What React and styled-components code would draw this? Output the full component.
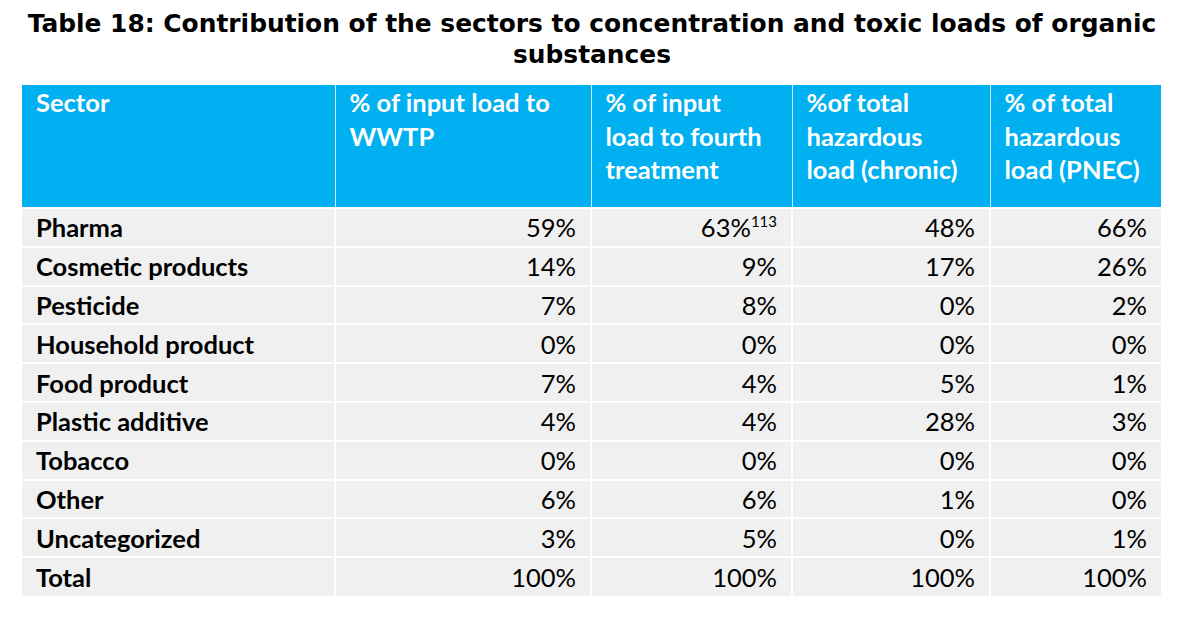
import React from 'react';
import styled, { createGlobalStyle } from 'styled-components';

const GlobalStyle = createGlobalStyle`
  html, body {
    margin: 0;
    padding: 0;
    background: #ffffff;
  }
`;

const Page = styled.div`
  width: 1200px;
  height: 629px;
  padding: 8px 22px 0 22px;
  box-sizing: border-box;
`;

const Caption = styled.h1`
  margin: 0 16px 15px 0;
  font-family: 'DejaVu Sans', Verdana, sans-serif;
  font-weight: bold;
  font-size: 24.9px;
  line-height: 31px;
  text-align: center;
  color: #000;
`;

const Table = styled.table`
  width: 1139px;
  border-collapse: collapse;
  table-layout: fixed;
  font-family: Lato, 'Open Sans', sans-serif;
  font-size: 25.5px;
  color: #000;
`;

const HeadCell = styled.th`
  background: #00b0f0;
  color: #ffffff;
  font-weight: bold;
  text-align: left;
  vertical-align: top;
  height: 123px;
  padding: 1px 8px 0 14px;
  line-height: 33.5px;
  border-left: 1px solid #cfeefb;
  box-sizing: border-box;
  &:first-child {
    border-left: none;
  }
`;

const HeadLine = styled.span`
  display: block;
  white-space: nowrap;
`;

const Row = styled.tr`
  height: 38.8px;
`;

const Cell = styled.td`
  background: #f0f0f0;
  padding: 0 14px;
  line-height: 36px;
  text-align: ${(p) => (p.$label ? 'left' : 'right')};
  font-weight: ${(p) => (p.$label ? 'bold' : 'normal')};
  border-top: 2px solid #ffffff;
  border-left: 2px solid #ffffff;
  &:first-child {
    border-left: none;
  }
`;

const Note = styled.sup`
  font-size: 15px;
  line-height: 0;
  vertical-align: 10px;
`;

const columns = [
  { key: 'sector', lines: ['Sector'], width: 313 },
  { key: 'wwtp', lines: ['% of input load to', 'WWTP'], width: 256 },
  { key: 'fourth', lines: ['% of input', 'load to fourth', 'treatment'], width: 201 },
  { key: 'chronic', lines: ['%of total', 'hazardous', 'load (chronic)'], width: 198 },
  { key: 'pnec', lines: ['% of total', 'hazardous', 'load (PNEC)'], width: 171 },
];

const rows = [
  ['Pharma', '59%', '63%', '48%', '66%'],
  ['Cosmetic products', '14%', '9%', '17%', '26%'],
  ['Pesticide', '7%', '8%', '0%', '2%'],
  ['Household product', '0%', '0%', '0%', '0%'],
  ['Food product', '7%', '4%', '5%', '1%'],
  ['Plastic additive', '4%', '4%', '28%', '3%'],
  ['Tobacco', '0%', '0%', '0%', '0%'],
  ['Other', '6%', '6%', '1%', '0%'],
  ['Uncategorized', '3%', '5%', '0%', '1%'],
  ['Total', '100%', '100%', '100%', '100%'],
];

const App = () => {
  return (
    <Page>
      <GlobalStyle />
      <Caption>
        Table 18: Contribution of the sectors to concentration and toxic loads of organic substances
      </Caption>
      <Table>
        <colgroup>
          {columns.map((c) => (
            <col key={c.key} style={{ width: c.width }} />
          ))}
        </colgroup>
        <thead>
          <tr>
            {columns.map((c) => (
              <HeadCell key={c.key}>
                {c.lines.map((l) => (
                  <HeadLine key={l}>{l}</HeadLine>
                ))}
              </HeadCell>
            ))}
          </tr>
        </thead>
        <tbody>
          {rows.map((r, i) => (
            <Row key={r[0]}>
              {r.map((v, j) => (
                <Cell key={j} $label={j === 0}>
                  {v}
                  {i === 0 && j === 2 && <Note>113</Note>}
                </Cell>
              ))}
            </Row>
          ))}
        </tbody>
      </Table>
    </Page>
  );
};

export default App;
